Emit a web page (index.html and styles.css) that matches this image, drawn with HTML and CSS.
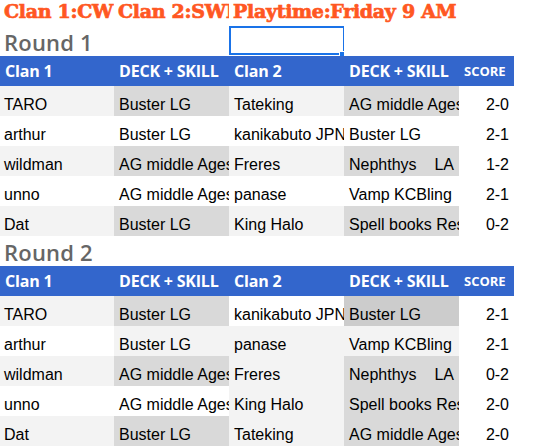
FILE: index.html
```html
<!DOCTYPE html>
<html>
<head>
<meta charset="utf-8">
<link rel="stylesheet" href="styles.css">
</head>
<body>
<div class="sheet">
  <div class="row title-row">
    <div class="cell title">Clan 1:CW</div>
    <div class="cell title">Clan 2:SWI</div>
    <div class="cell title overflow">Playtime:Friday 9 AM</div>
    <div class="cell"></div>
    <div class="cell"></div>
  </div>

  <div class="row round-row">
    <div class="cell round overflow">Round 1</div>
    <div class="cell"></div>
    <div class="cell selected"><span class="handle"></span></div>
    <div class="cell"></div>
    <div class="cell"></div>
  </div>
  <div class="row head-row">
    <div class="cell">Clan 1</div>
    <div class="cell">DECK + SKILL</div>
    <div class="cell">Clan 2</div>
    <div class="cell">DECK + SKILL</div>
    <div class="cell score-head">SCORE</div>
  </div>
  <div class="row data">
    <div class="cell l">TARO</div>
    <div class="cell g">Buster LG</div>
    <div class="cell l">Tateking</div>
    <div class="cell g">AG middle Ages</div>
    <div class="cell score">2-0</div>
  </div>
  <div class="row data">
    <div class="cell">arthur</div>
    <div class="cell">Buster LG</div>
    <div class="cell">kanikabuto JPN</div>
    <div class="cell">Buster LG</div>
    <div class="cell score">2-1</div>
  </div>
  <div class="row data">
    <div class="cell l">wildman</div>
    <div class="cell g">AG middle Ages</div>
    <div class="cell l">Freres</div>
    <div class="cell g">Nephthys    LA</div>
    <div class="cell score">1-2</div>
  </div>
  <div class="row data">
    <div class="cell">unno</div>
    <div class="cell">AG middle Ages</div>
    <div class="cell">panase</div>
    <div class="cell">Vamp KCBling</div>
    <div class="cell score">2-1</div>
  </div>
  <div class="row data">
    <div class="cell l">Dat</div>
    <div class="cell g">Buster LG</div>
    <div class="cell l">King Halo</div>
    <div class="cell g">Spell books Res</div>
    <div class="cell score">0-2</div>
  </div>

  <div class="row round-row">
    <div class="cell round overflow">Round 2</div>
    <div class="cell"></div>
    <div class="cell"></div>
    <div class="cell"></div>
    <div class="cell"></div>
  </div>
  <div class="row head-row">
    <div class="cell">Clan 1</div>
    <div class="cell">DECK + SKILL</div>
    <div class="cell">Clan 2</div>
    <div class="cell">DECK + SKILL</div>
    <div class="cell score-head">SCORE</div>
  </div>
  <div class="row data">
    <div class="cell l">TARO</div>
    <div class="cell g">Buster LG</div>
    <div class="cell">kanikabuto JPN</div>
    <div class="cell d">Buster LG</div>
    <div class="cell score">2-1</div>
  </div>
  <div class="row data">
    <div class="cell">arthur</div>
    <div class="cell l">Buster LG</div>
    <div class="cell l">panase</div>
    <div class="cell l">Vamp KCBling</div>
    <div class="cell score">2-1</div>
  </div>
  <div class="row data">
    <div class="cell l">wildman</div>
    <div class="cell g">AG middle Ages</div>
    <div class="cell l">Freres</div>
    <div class="cell g">Nephthys    LA</div>
    <div class="cell score">0-2</div>
  </div>
  <div class="row data">
    <div class="cell">unno</div>
    <div class="cell">AG middle Ages</div>
    <div class="cell l">King Halo</div>
    <div class="cell g">Spell books Res</div>
    <div class="cell score">2-0</div>
  </div>
  <div class="row data">
    <div class="cell l">Dat</div>
    <div class="cell g">Buster LG</div>
    <div class="cell l">Tateking</div>
    <div class="cell g">AG middle Ages</div>
    <div class="cell score">2-0</div>
  </div>
</div>
</body>
</html>
```

FILE: styles.css
```css
html, body {
  margin: 0;
  padding: 0;
  background: #ffffff;
}

.sheet {
  display: flex;
  flex-direction: column;
  width: 514px;
}

.row {
  display: grid;
  grid-template-columns: 114px 115px 115px 115px 55px;
  height: 30px;
}

.cell {
  position: relative;
  overflow: hidden;
  white-space: pre;
  display: flex;
  align-items: flex-end;
  padding: 0 4px 2px 4px;
  box-sizing: border-box;
}

.cell.overflow {
  overflow: visible;
}

.title-row {
  height: 26px;
}

.title-row .cell {
  padding-bottom: 4px;
}

.title {
  font-family: "DejaVu Serif", serif;
  font-weight: 700;
  font-size: 19px;
  line-height: 22px;
  color: #ff5722;
  letter-spacing: -0.3px;
  -webkit-text-stroke: 0.7px #ff5722;
}

.round-row .cell {
  padding-bottom: 0;
}

.round {
  font-family: "Open Sans", sans-serif;
  font-weight: 600;
  font-size: 22px;
  line-height: 28px;
  color: #666666;
  letter-spacing: 0.2px;
}

.selected::after {
  content: "";
  position: absolute;
  top: 0;
  left: 0;
  right: -1px;
  bottom: 1px;
  border: 2px solid #1a73e8;
}

.handle {
  position: absolute;
  right: -3px;
  bottom: -3px;
  width: 7px;
  height: 7px;
  background: #1a73e8;
  border-top: 1px solid #ffffff;
  border-left: 1px solid #ffffff;
  z-index: 2;
}

.head-row {
  background: #3366cc;
}

.head-row .cell {
  align-items: center;
  padding: 0 5px;
  font-family: "Open Sans", sans-serif;
  font-weight: 700;
  font-size: 16px;
  letter-spacing: -0.2px;
  color: #ffffff;
}

.head-row .score-head {
  font-size: 13px;
  letter-spacing: 0;
}

.data .cell {
  font-family: "Liberation Sans", Arial, sans-serif;
  font-size: 16px;
  line-height: 18px;
  color: #000000;
}

.data .cell:nth-child(n+2) {
  padding-left: 5px;
}

.cell.l {
  background: #f3f3f3;
}

.cell.g {
  background: #d9d9d9;
}

.cell.d {
  background: #cccccc;
}

.data .score {
  justify-content: flex-end;
  padding-right: 5px;
}
```
